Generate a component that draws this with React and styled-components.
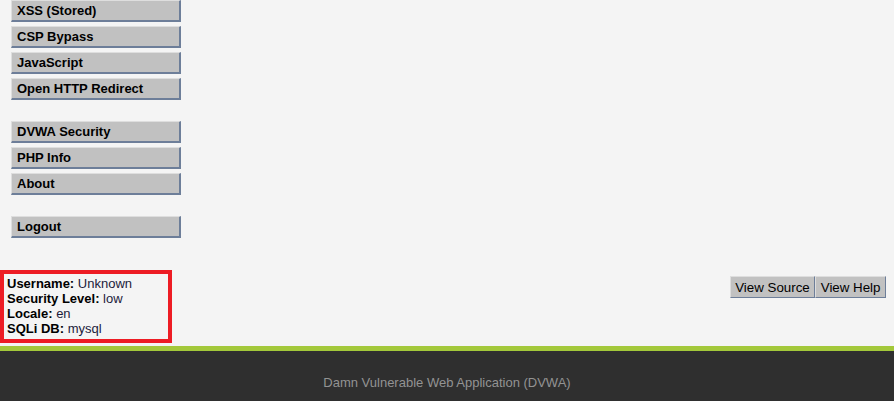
import styled, { createGlobalStyle } from "styled-components";

const GlobalStyle = createGlobalStyle`
	html, body {
		margin: 0;
		padding: 0;
		background: #f4f4f4;
		font-family: "Liberation Sans", Arial, sans-serif;
	}
`;

const Page = styled.div`
	display: flex;
	flex-direction: column;
	width: 894px;
	height: 401px;
	overflow: hidden;
`;

const Menu = styled.ul`
	list-style: none;
	margin: 0;
	padding: 0 0 0 11px;
	width: 170px;
	display: flex;
	flex-direction: column;
	gap: 4px;
`;

const MenuItem = styled.li`
	box-sizing: border-box;
	height: 22px;
	margin-top: ${(p) => (p.$spaced ? "17px" : "0")};
	background: #c1c1c1;
	border-top: 1px solid #dedede;
	border-left: 1px solid #dedede;
	border-bottom: 2px solid #6d7e99;
	border-right: 2px solid #6d7e99;
	padding: 0 0 0 5px;
	font-size: 13px;
	font-weight: bold;
	line-height: 20px;
	color: #000;
`;

const InfoRow = styled.div`
	display: flex;
	justify-content: space-between;
	align-items: flex-start;
	margin-top: 32px;
	padding-right: 8px;
`;

const InfoBox = styled.div`
	box-sizing: border-box;
	width: 172px;
	height: 73px;
	border: 4px solid #ed1c24;
	padding: 2px 0 0 3px;
	font-size: 13px;
	line-height: 15px;
	color: #1b1b3a;
`;

const Label = styled.b`
	color: #000;
`;

const Buttons = styled.div`
	display: flex;
	margin-top: 6px;
`;

const Button = styled.button`
	box-sizing: border-box;
	height: 22px;
	background: #c1c1c1;
	border: none;
	border-top: 1px solid #dedede;
	border-left: 1px solid #dedede;
	border-bottom: 1px solid #6d7e99;
	border-right: 1px solid #6d7e99;
	padding: 0 4.5px;
	font-family: "Liberation Sans", Arial, sans-serif;
	font-size: 13.33px;
	color: #000;
`;

const Footer = styled.div`
	margin-top: 3px;
	flex: 1;
	background: #2f2f2f;
	border-top: 5px solid #a3c83a;
	display: flex;
	justify-content: center;
	align-items: center;
	padding-top: 12px;
	color: #939393;
	font-size: 13px;
`;

const firstGroup = ["XSS (Stored)", "CSP Bypass", "JavaScript", "Open HTTP Redirect"];
const secondGroup = ["DVWA Security", "PHP Info", "About"];

export default function App() {
	return (
		<Page>
			<GlobalStyle />
			<Menu>
				{firstGroup.map((item) => (
					<MenuItem key={item}>{item}</MenuItem>
				))}
				{secondGroup.map((item, i) => (
					<MenuItem key={item} $spaced={i === 0}>
						{item}
					</MenuItem>
				))}
				<MenuItem $spaced>Logout</MenuItem>
			</Menu>

			<InfoRow>
				<InfoBox>
					<Label>Username:</Label> Unknown
					<br />
					<Label>Security Level:</Label> low
					<br />
					<Label>Locale:</Label> en
					<br />
					<Label>SQLi DB:</Label> mysql
				</InfoBox>
				<Buttons>
					<Button>View Source</Button>
					<Button>View Help</Button>
				</Buttons>
			</InfoRow>

			<Footer>Damn Vulnerable Web Application (DVWA)</Footer>
		</Page>
	);
}
